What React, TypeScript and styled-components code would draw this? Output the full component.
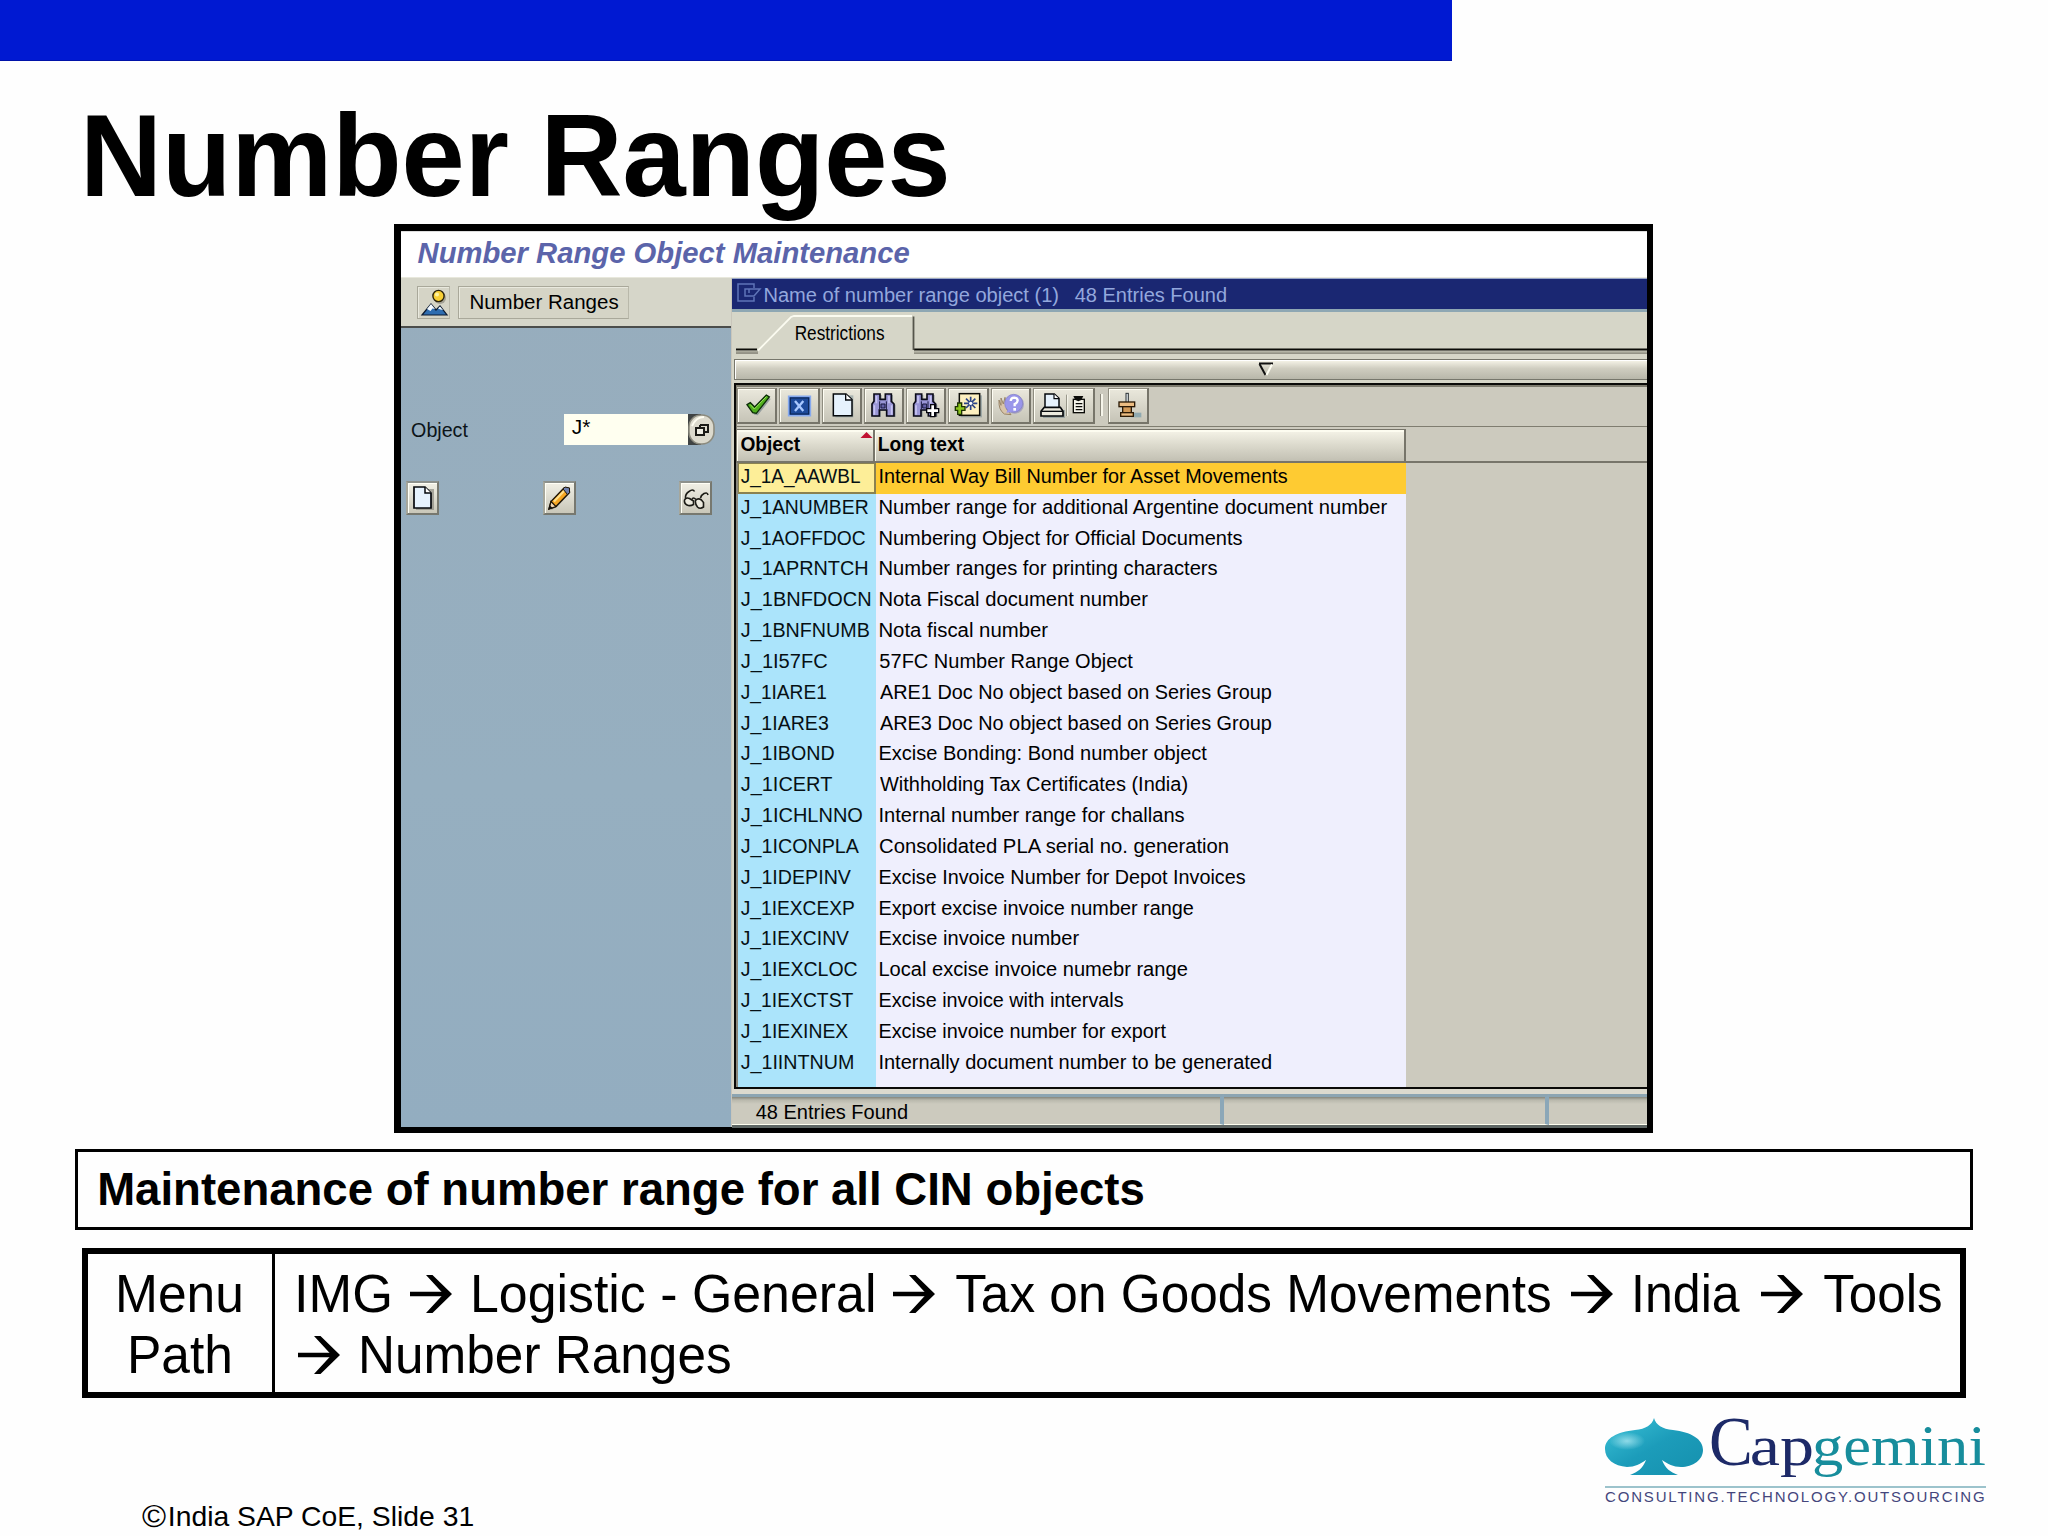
import React, { useLayoutEffect, useRef, useState } from "react";
import styled, { createGlobalStyle } from "styled-components";

const GlobalStyle = createGlobalStyle`
  html, body { margin: 0; padding: 0; background: #fefefe; }
  *, *::before, *::after { box-sizing: border-box; }
  body { font-family: "Liberation Sans", Arial, sans-serif; color: #000; overflow: hidden; }
`;

/* ---------- fitted text ---------- */

const FitBox = styled.span<{ $w: number; $size: number; $lh: number; $bold?: boolean; $italic?: boolean; $color?: string; $serif?: boolean; $gap?: number }>`
  display: block;
  flex: none;
  width: ${(p) => p.$w}px;
  height: ${(p) => p.$lh}px;
  line-height: ${(p) => p.$lh}px;
  font-size: ${(p) => p.$size}px;
  font-weight: ${(p) => (p.$bold ? 700 : 400)};
  font-style: ${(p) => (p.$italic ? "italic" : "normal")};
  font-family: ${(p) => (p.$serif ? '"Liberation Serif", "Times New Roman", serif' : '"Liberation Sans", Arial, sans-serif')};
  color: ${(p) => p.$color ?? "#000"};
  margin-left: ${(p) => p.$gap ?? 0}px;
  white-space: pre;
`;

const FitInner = styled.span`
  display: inline-block;
  transform-origin: 0 0;
`;

type FitProps = {
  children: string;
  w: number;
  size: number;
  lh: number;
  bold?: boolean;
  italic?: boolean;
  serif?: boolean;
  color?: string;
  gap?: number;
};

/* Stretches a line of text so that its ink spans exactly w pixels. */
function Fit({ children, w, size, lh, bold, italic, serif, color, gap }: FitProps) {
  const ref = useRef<HTMLSpanElement>(null);
  const [tf, setTf] = useState("none");
  useLayoutEffect(() => {
    const el = ref.current;
    const ctx = document.createElement("canvas").getContext("2d");
    if (!el || !ctx) return;
    const cs = getComputedStyle(el);
    ctx.font = `${cs.fontStyle} ${cs.fontWeight} 400px ${cs.fontFamily}`;
    const m = ctx.measureText(children);
    const k = parseFloat(cs.width) / m.width;
    const left = -m.actualBoundingBoxLeft * k;
    const s = w / (m.actualBoundingBoxRight * k - left);
    setTf(`translateX(${-left * s}px) scaleX(${s})`);
  }, [children, w]);
  return (
    <FitBox $w={w} $size={size} $lh={lh} $bold={bold} $italic={italic} $serif={serif} $color={color} $gap={gap}>
      <FitInner ref={ref} style={{ transform: tf }}>
        {children}
      </FitInner>
    </FitBox>
  );
}

/* ---------- slide ---------- */

const Slide = styled.main`
  width: 2048px;
  height: 1536px;
  overflow: hidden;
  display: flex;
  flex-direction: column;
  align-items: flex-start;
  background: #fefefe;
`;

const TopBar = styled.div`
  flex: none;
  width: 1452px;
  height: 61px;
  background: #0019d2;
  border-bottom: 1px solid #0012a8;
`;

const Heading = styled.h1`
  margin: 0;
  flex: none;
  height: 163px;
  padding-left: 87px;
`;

const Frame = styled.section`
  flex: none;
  width: 1259px;
  height: 909px;
  margin-left: 394px;
  border: 6px solid #000;
  border-top-width: 7px;
  border-left-width: 7px;
  display: flex;
  flex-direction: column;
  background: #d6d6c8;
`;

const ScreenTitle = styled.header`
  flex: none;
  height: 47px;
  padding-left: 17px;
  background: #fff;
  border-top: 1px solid #ddd;
  border-bottom: 1px solid #e8e8dc;
`;

const Split = styled.div`
  flex: 1;
  min-height: 0;
  display: flex;
`;

/* ---------- left pane ---------- */

const LeftPane = styled.div`
  flex: none;
  width: 330px;
  display: flex;
  flex-direction: column;
  background: linear-gradient(#97adbd, #96afc0 60%, #93adc0);
`;

const LeftBar = styled.div`
  flex: none;
  height: 50px;
  display: flex;
  gap: 8px;
  padding: 8px 0 0 16px;
  background: #d6d6c9;
  border-bottom: 2px solid #4b4d4b;
`;

const FlatButton = styled.button<{ $w: number }>`
  width: ${(p) => p.$w}px;
  height: 33px;
  padding: 0;
  display: flex;
  border: 1px solid #a9a89a;
  border-right-color: #b9b8aa;
  box-shadow: inset 1px 1px 0 #e9e9de;
  background: #d5d4c6;
`;

const FieldRow = styled.div`
  flex: none;
  height: 31px;
  margin-top: 86px;
  padding-left: 11px;
  display: flex;
`;

const Field = styled.div`
  width: 124px;
  height: 31px;
  margin-left: 96px;
  padding-left: 8px;
  background: #fffff0;
`;

const MatchCode = styled.div`
  width: 27px;
  height: 31px;
  background: linear-gradient(90deg, #3f4343 50%, transparent 50%);
`;

const ActionRow = styled.div`
  flex: none;
  margin-top: 36px;
  padding: 0 19px 0 5px;
  display: flex;
  justify-content: space-between;
`;

const SquareButton = styled.button`
  width: 33px;
  height: 34px;
  padding: 0;
  display: flex;
  border: 2px solid #77786f;
  border-top-color: #8d918c;
  border-left-color: #a6a79c;
  box-shadow: inset 1px 1px 0 #fffff6;
  background: linear-gradient(#f1f0e6, #c9c7b9);
`;

/* ---------- result list ---------- */

const Popup = styled.div`
  flex: 1;
  min-width: 0;
  display: flex;
  flex-direction: column;
  border-left: 1px solid #c9c6bb;
  background: #d6d6c8;
`;

const PopupTitle = styled.div`
  flex: none;
  height: 34px;
  display: flex;
  padding-left: 5px;
  border-top: 1px solid #9aa7c6;
  border-bottom: 3px solid #8ea7b3;
  background: #1a2772;
`;

const TabStrip = styled.div`
  flex: none;
  height: 47px;
  position: relative;
`;

const TabShape = styled.svg`
  position: absolute;
  left: 0;
  top: 0;
`;

const TabLabel = styled.div`
  position: relative;
  padding-left: 64px;
`;

const Splitter = styled.div`
  flex: none;
  height: 21px;
  margin-left: 2px;
  padding: 2px 0 0 523px;
  border: 1px solid #77776c;
  border-right: 0;
  box-shadow: inset 1px 1px 0 #fff;
  background: linear-gradient(#f8f6ea, #cfcdc0 45%, #b8b7aa);
`;

const ListBox = styled.div`
  flex: none;
  height: 706px;
  margin: 3px 0 0 2px;
  border: 2px solid #0a0a08;
  border-right: 0;
  box-shadow: inset 1px 2px 0 #7d7b6e;
  background: #cccabe;
  display: flex;
  flex-direction: column;
`;

const ToolBar = styled.div`
  flex: none;
  height: 42px;
  padding: 3px 0 0 1px;
  display: flex;
  border-bottom: 1px solid #7f7d70;
`;

const ToolButton = styled.button<{ $w: number; $gap?: number }>`
  flex: none;
  width: ${(p) => p.$w}px;
  height: 36px;
  padding: 0;
  margin-left: ${(p) => p.$gap ?? 2}px;
  display: flex;
  border: 1px solid #8f8d80;
  border-right: 2px solid #77756a;
  border-bottom: 2px solid #77756a;
  box-shadow: inset 1px 1px 0 #fffef4;
  background: linear-gradient(#eae8dc, #c6c4b7);
  svg { margin: -1px; flex: none; }
`;

const Divider = styled.i`
  flex: none;
  width: 3px;
  height: 22px;
  margin: 6px 0 0 5px;
  border-left: 1px solid #8a887c;
  border-right: 2px solid #f6f5ea;
`;

const HeadRow = styled.div`
  flex: none;
  height: 36px;
  padding: 2px 0 0 1px;
  display: flex;
  border-bottom: 2px solid #77756a;
`;

const HeadCell = styled.div<{ $w: number }>`
  flex: none;
  width: ${(p) => p.$w}px;
  height: 32px;
  display: flex;
  padding-left: 3px;
  border-top: 1px solid #77756a;
  border-right: 2px solid #77756a;
  box-shadow: inset 1px 2px 0 #fdfcf0;
  background: linear-gradient(#f6f4e8, #dbd9cc 50%, #c2c0b3);
`;

const SortMark = styled.svg`
  margin: 2px 0 0 60px;
`;

const Grid = styled.div`
  flex: 1;
  width: 670px;
  padding-left: 2px;
  display: flex;
  flex-direction: column;
  background: linear-gradient(90deg, #8a887c 2px, #abe4fb 2px, #abe4fb 139.6px, #efeffd 139.6px);
`;

const Row = styled.div<{ $on?: boolean }>`
  flex: none;
  height: 30.84px;
  display: flex;
  background: ${(p) => (p.$on ? "#fecb32" : "transparent")};
`;

const KeyCell = styled.div<{ $on?: boolean }>`
  flex: none;
  width: 137.6px;
  padding-left: 3px;
  background: ${(p) => (p.$on ? "#fdee98" : "transparent")};
  box-shadow: ${(p) => (p.$on ? "inset -2px -2px 0 #8a8250, inset 1px 1px 0 #8a8250" : "none")};
`;

const StatusBar = styled.div`
  flex: none;
  height: 39px;
  display: flex;
  padding-top: 5px;
  border-bottom: 3px solid #5e6664;
  background: #dcdace;
`;

const StatusCell = styled.div<{ $w?: number }>`
  flex: ${(p) => (p.$w ? "none" : "1")};
  width: ${(p) => (p.$w ? `${p.$w}px` : "auto")};
  padding-left: 24px;
  border-top: 3px solid #8ca5b2;
  border-right: ${(p) => (p.$w ? "4px solid #8ba7b8" : "0")};
  border-bottom: 1px solid #fffff0;
  background: linear-gradient(#85867b, #b9b8ac 3px, #cccabe 7px);
`;

/* ---------- notes ---------- */

const Note = styled.div`
  flex: none;
  width: 1898px;
  height: 81px;
  margin: 16px 0 0 75px;
  padding-left: 22px;
  border: 3px solid #000;
`;

const PathTable = styled.div`
  flex: none;
  width: 1884px;
  height: 150px;
  margin: 18px 0 0 82px;
  border: 6px solid #000;
  display: flex;
`;

const PathLabel = styled.div`
  width: 187px;
  padding: 9px 0 0 0;
  border-right: 3px solid #000;
  display: flex;
  flex-direction: column;
  align-items: center;
`;

const PathBody = styled.div`
  flex: 1;
  padding: 9px 0 0 23px;
`;

const PathLine = styled.div`
  display: flex;
  height: 61.3px;
`;

const Arrow = styled.svg<{ $gap: number }>`
  flex: none;
  margin: 12px 0 0 ${(p) => p.$gap}px;
`;

const Foot = styled.footer`
  flex: none;
  width: 2048px;
  height: 138px;
  padding: 0 61px 0 142px;
  display: flex;
  justify-content: space-between;
`;

const Copyright = styled.div`
  margin-top: 104px;
  display: flex;
`;

const Logo = styled.div`
  width: 383px;
  margin-top: 18px;
  padding-left: 1px;
`;

const LogoTop = styled.div`
  height: 70px;
  display: flex;
`;

const LogoRule = styled.div`
  width: 381px;
  height: 2px;
  margin-bottom: 1px;
  background: #9cc3cc;
`;

const TagLine = styled.div`
  width: 384px;
  font-size: 15px;
  line-height: 15px;
  color: #44467c;
  letter-spacing: 1.83px;
  white-space: nowrap;
`;

/* ---------- drawings ---------- */

const Icon = ({ w = 40, children }: { w?: number; children: React.ReactNode }) => (
  <svg width={w} height={36} viewBox={`0 0 ${w * 3} 108`}>
    {children}
  </svg>
);

const Binoculars = () => (
  <g>
    <path d="M24 84V48L30 40V18H48V34H64V18H82V40L90 48V84H68V66H46V84Z" fill="#5f6f7c" opacity=".5" transform="translate(5 3)" />
    <path d="M24 84V48L30 40V18H48V34H64V18H82V40L90 48V84H68V66H46V84Z" fill="#9a96d6" stroke="#0b0b18" strokeWidth="5" />
    <path d="M37 24V46M75 24V46M31 52V80M83 52V80" stroke="#c8c5f2" strokeWidth="5" />
    <path d="M47 40V64M67 40V64" stroke="#16163a" strokeWidth="3" />
    <path d="M51 48H63V60H51Z" fill="#6561a8" stroke="#16163a" strokeWidth="3" />
  </g>
);

const PageDrawing = () => (
  <g>
    <path d="M40 22H94V88H40Z" fill="#7c8f96" opacity=".55" />
    <path d="M34 18H72L90 35V83H34Z" fill="#e6f2fd" stroke="#05080c" strokeWidth="4.5" />
    <path d="M71 18V36H90" fill="#fff" stroke="#05080c" strokeWidth="4" />
  </g>
);

const PathArrow = ({ gap = 21 }: { gap?: number }) => (
  <Arrow $gap={gap} width="42" height="38" viewBox="0 0 42 38">
    <path d="M0 19H38" stroke="#000" strokeWidth="4.6" fill="none" />
    <path d="M16 0H22.5L42 19L22.5 38H16L33.5 19Z" fill="#000" />
  </Arrow>
);

/* ---------- data ---------- */

const rows: [string, number, string, number][] = [
  ["J_1A_AAWBL", 119, "Internal Way Bill Number for Asset Movements", 407],
  ["J_1ANUMBER", 127, "Number range for additional Argentine document number", 507],
  ["J_1AOFFDOC", 124, "Numbering Object for Official Documents", 362],
  ["J_1APRNTCH", 126, "Number ranges for printing characters", 337],
  ["J_1BNFDOCN", 129, "Nota Fiscal document number", 268],
  ["J_1BNFNUMB", 128, "Nota fiscal number", 168],
  ["J_1I57FC", 86, "57FC Number Range Object", 253],
  ["J_1IARE1", 85, "ARE1 Doc No object based on Series Group", 391],
  ["J_1IARE3", 87, "ARE3 Doc No object based on Series Group", 391],
  ["J_1IBOND", 93, "Excise Bonding: Bond number object", 327],
  ["J_1ICERT", 91, "Withholding Tax Certificates (India)", 307],
  ["J_1ICHLNNO", 121, "Internal number range for challans", 304],
  ["J_1ICONPLA", 118, "Consolidated PLA serial no. generation", 348],
  ["J_1IDEPINV", 110, "Excise Invoice Number for Depot Invoices", 365],
  ["J_1IEXCEXP", 113, "Export excise invoice number range", 313],
  ["J_1IEXCINV", 108, "Excise invoice number", 199],
  ["J_1IEXCLOC", 116, "Local excise invoice numebr range", 307],
  ["J_1IEXCTST", 112, "Excise invoice with intervals", 243],
  ["J_1IEXINEX", 107, "Excise invoice number for export", 286],
  ["J_1IINTNUM", 112, "Internally document number to be generated", 391],
];

export default function App() {
  return (
    <Slide>
      <GlobalStyle />
      <TopBar />
      <Heading>
        <Fit w={859} size={117} lh={189} bold>Number Ranges</Fit>
      </Heading>

      <Frame>
        <ScreenTitle>
          <Fit w={491} size={29} lh={42} bold italic color="#5b64aa">Number Range Object Maintenance</Fit>
        </ScreenTitle>
        <Split>
          <LeftPane>
            <LeftBar>
              <FlatButton $w={33}>
                <svg width="31" height="31" viewBox="0 0 31 31">
                  <circle cx="22" cy="11" r="6" fill="#8d8c80" opacity=".7" />
                  <circle cx="20.5" cy="9" r="5.6" fill="#f8cf35" stroke="#2a2108" strokeWidth="1.4" />
                  <circle cx="19" cy="7.6" r="2" fill="#fff3a0" />
                  <path d="M4 28L13 17L18 23L22 19L29 28Z" fill="#2f6db0" stroke="#0c1a30" strokeWidth="1.2" />
                  <path d="M9 22L13 17L17 22L14.5 21.5L12.5 24Z M20 21.5L22 19.4L25 23L22.5 22.5Z" fill="#f4faff" />
                </svg>
              </FlatButton>
              <FlatButton $w={171}>
                <Fit w={147} size={20} lh={31} gap={11}>Number Ranges</Fit>
              </FlatButton>
            </LeftBar>
            <FieldRow>
              <Fit w={56} size={20} lh={32} color="#0c1418">Object</Fit>
              <Field>
                <Fit w={18} size={20} lh={27}>J*</Fit>
              </Field>
              <MatchCode>
                <svg width="27" height="31" viewBox="0 0 27 31">
                  <rect x="1" y="1" width="25" height="29" rx="12" fill="#dcdacd" stroke="#8c8b7e" strokeWidth="1.6" />
                  <path d="M4 12Q8 3 16 3" stroke="#fffef2" strokeWidth="2" fill="none" />
                  <path d="M12 11H20V18H17M12 11V14" fill="none" stroke="#1b1b17" strokeWidth="2" />
                  <rect x="8" y="14" width="8" height="7" fill="#efeee4" stroke="#1b1b17" strokeWidth="2" />
                </svg>
              </MatchCode>
            </FieldRow>
            <ActionRow>
              <SquareButton>
                <svg width="29" height="30" viewBox="0 0 29 30">
                  <path d="M8 6H26V27H8Z" fill="#8b8a80" opacity=".7" />
                  <path d="M6 4H17L23 10V25H6Z" fill="#e6f2fd" stroke="#05080c" strokeWidth="1.7" />
                  <path d="M17 4V10H23" fill="#fff" stroke="#05080c" strokeWidth="1.5" />
                </svg>
              </SquareButton>
              <SquareButton>
                <svg width="29" height="30" viewBox="0 0 29 30">
                  <path d="M6 27L9 20L22 6L26 9L12 24Z" fill="#6f6e66" opacity=".6" />
                  <path d="M4 26L6 18.5L19 5L24 5.5L24 10L11 23.5Z" fill="#f5a623" stroke="#1d1406" strokeWidth="1.4" />
                  <path d="M9 18.5L19.5 7.5" stroke="#ffe08a" strokeWidth="2" />
                  <path d="M18 6L20 4L24.5 5L24.5 9.5L22.5 11.5Z" fill="#6d7fae" stroke="#1d1406" strokeWidth="1" />
                  <path d="M4 26L6 18.5L11 23.5Z" fill="#f4d9b4" stroke="#1d1406" strokeWidth="1.2" />
                  <path d="M4 26L5 22.5L7.6 25Z" fill="#111" />
                </svg>
              </SquareButton>
              <SquareButton>
                <svg width="29" height="30" viewBox="0 0 29 30" fill="none" stroke="#1b1b15" strokeWidth="1.6">
                  <path d="M4.5 15.5Q4 11 8 8.5Q12 5.5 13.5 8.5M19.5 15Q20 12 23 10.5Q26.5 9 27 12" />
                  <path d="M3.5 17Q5 14 8.5 15.5L12.5 18V21.5Q9 23.5 6 22Q3 20.5 3.5 17Z" fill="#eceade" />
                  <path d="M14.5 17.5Q17 14.5 20.5 17L22.5 19.5V24Q19 26.5 16.5 24Q14 21 14.5 17.5Z" fill="#eceade" />
                  <path d="M11 16.5Q12 13.5 15 16.5" />
                </svg>
              </SquareButton>
            </ActionRow>
          </LeftPane>

          <Popup>
            <PopupTitle>
              <svg width="25" height="28" viewBox="0 0 25 28" fill="none" stroke="#5f74b8" strokeWidth="1.5">
                <path d="M17 9V5H1V22H17V18" />
                <path d="M23 10H8V17H17L23 10H12V14" />
              </svg>
              <Fit w={293} size={19.5} lh={33} gap={3} color="#93a7dd">Name of number range object (1)</Fit>
              <Fit w={151} size={19.5} lh={33} gap={17} color="#93a7dd">48 Entries Found</Fit>
            </PopupTitle>
            <TabStrip>
              <TabShape width="915" height="48" viewBox="0 0 915 48">
                <path d="M4 37.5H25M182 37.5H915" stroke="#0c0c08" strokeWidth="2" />
                <path d="M4 41H26M182 41H915" stroke="#7d7c70" strokeWidth="1.4" />
                <path d="M182 40H915M4 39.5H26" stroke="#a9a99b" strokeWidth="1.4" />
                <path d="M26 38.5L59 5L62 4H180" fill="none" stroke="#fbfbf0" strokeWidth="1.8" />
                <path d="M181.5 4.5V38" stroke="#55554b" strokeWidth="1.8" />
              </TabShape>
              <TabLabel>
                <Fit w={88} size={20} lh={43}>Restrictions</Fit>
              </TabLabel>
            </TabStrip>
            <Splitter>
              <svg width="16" height="14" viewBox="0 0 16 14">
                <path d="M1 1.5H15" stroke="#111" strokeWidth="2" />
                <path d="M1.5 2L7.5 13" stroke="#111" strokeWidth="2" />
                <path d="M14 2.5L8.5 13" stroke="#fffff4" strokeWidth="2" />
              </svg>
            </Splitter>
            <ListBox>
              <ToolBar>
                <ToolButton $w={40.3} $gap={0}>
                  <Icon>
                    <path d="M36 56L44 51L58 64L92 27L101 33L62 82L52 80Z" fill="#6b7c84" opacity=".6" />
                    <path d="M30 50L40 44L53 57L88 21L97 27L58 76L47 74Z" fill="#4fae1d" stroke="#0b2c07" strokeWidth="4" />
                    <path d="M40 50L52 63L88 26" stroke="#9be35a" strokeWidth="3" fill="none" />
                  </Icon>
                </ToolButton>
                <ToolButton $w={40.3}>
                  <Icon>
                    <rect x="29" y="25" width="65" height="58" fill="#1d4a9b" stroke="#86a9ee" strokeWidth="5" />
                    <rect x="34" y="30" width="55" height="48" fill="none" stroke="#0d2450" strokeWidth="3" />
                    <path d="M48 39L73 69M73 39L48 69" stroke="#a9c8ff" strokeWidth="7" />
                  </Icon>
                </ToolButton>
                <ToolButton $w={40.3}>
                  <Icon><PageDrawing /></Icon>
                </ToolButton>
                <ToolButton $w={40.3}>
                  <Icon><Binoculars /></Icon>
                </ToolButton>
                <ToolButton $w={40.3}>
                  <Icon>
                    <g transform="translate(-1 0)"><Binoculars /></g>
                    <path d="M74 50H86V62H98V74H86V86H74V74H62V62H74Z" fill="#fff" stroke="#05050c" strokeWidth="4" />
                  </Icon>
                </ToolButton>
                <ToolButton $w={40.3}>
                  <Icon>
                    <rect x="38" y="22" width="64" height="66" fill="#7d8f95" opacity=".6" />
                    <rect x="34" y="17" width="61" height="65" fill="#fdf0c0" stroke="#0c0c08" strokeWidth="4.5" />
                    <path d="M68 26V66M48 46H88M54 32L82 60M82 32L54 60" stroke="#2c4488" strokeWidth="5" />
                    <circle cx="68" cy="46" r="5" fill="#fff" />
                    <path d="M29 45H41V56H51V67H41V79H29V67H22V56H29Z" fill="#8cc51c" stroke="#1c3204" strokeWidth="4" />
                  </Icon>
                </ToolButton>
                <ToolButton $w={40.3}>
                  <Icon>
                    <path d="M40 78Q22 66 24 36L30 52L30 30L37 48L42 28L45 48L56 40L46 62L60 80Z" fill="#d8c4aa" stroke="#9a8568" strokeWidth="3" />
                    <circle cx="71" cy="49" r="28" fill="#7a78b8" opacity=".5" />
                    <circle cx="68" cy="46" r="27" fill="#9a96ea" stroke="#7f7bc4" strokeWidth="2" />
                    <path d="M46 74L52 62L64 72Z" fill="#9a96ea" />
                    <path d="M59 39Q60 29 70 29Q80 30 80 38Q79 45 71 48V55" stroke="#fff" strokeWidth="7" fill="none" />
                    <rect x="67" y="60" width="8" height="8" fill="#fff" />
                  </Icon>
                </ToolButton>
                <ToolButton $w={62}>
                  <Icon w={62}>
                    <path d="M30 66H96V90H30Z" fill="#7d8f95" opacity=".6" />
                    <path d="M36 60V18H64L78 31V60Z" fill="#e6f2fd" stroke="#05080c" strokeWidth="4.5" />
                    <path d="M63 18V32H78" fill="#fff" stroke="#05080c" strokeWidth="3.5" />
                    <path d="M34 58L24 70V84H90V70L82 58Z" fill="#eceadf" stroke="#05080c" strokeWidth="5" />
                    <path d="M25 70H89" stroke="#05080c" strokeWidth="4" />
                    <path d="M101 20V84" stroke="#8d8b7e" strokeWidth="3" />
                    <path d="M104 20V84" stroke="#fbfaf0" strokeWidth="3" />
                    <rect x="121" y="34" width="33" height="40" fill="#f6f5ec" stroke="#0b0b08" strokeWidth="4" />
                    <path d="M121 24H151L145 36L136 40L127 36Z" fill="#0b0b08" />
                    <path d="M128 47H148M128 56H148M128 65H148" stroke="#0b0b08" strokeWidth="4" />
                  </Icon>
                </ToolButton>
                <Divider />
                <ToolButton $w={41} $gap={5}>
                  <Icon>
                    <path d="M70 74H100V88H70Z" fill="#7fa0ac" opacity=".8" />
                    <rect x="54" y="16" width="7" height="32" fill="#dfe6ea" stroke="#2c3236" strokeWidth="3" />
                    <rect x="33" y="42" width="47" height="14" fill="#edbd82" stroke="#2b1a06" strokeWidth="4" />
                    <rect x="44" y="56" width="26" height="19" fill="#d39a58" stroke="#2b1a06" strokeWidth="4" />
                    <rect x="38" y="74" width="38" height="11" fill="#edbd82" stroke="#2b1a06" strokeWidth="4" />
                  </Icon>
                </ToolButton>
              </ToolBar>
              <HeadRow>
                <HeadCell $w={138}>
                  <Fit w={59} size={19.5} lh={29} bold gap={1}>Object</Fit>
                  <SortMark width="13" height="7" viewBox="0 0 13 7">
                    <path d="M6.5 0L12.5 6H0.5Z" fill="#c01030" />
                  </SortMark>
                </HeadCell>
                <HeadCell $w={531}>
                  <Fit w={85} size={19.5} lh={29} bold gap={1}>Long text</Fit>
                </HeadCell>
              </HeadRow>
              <Grid>
                {rows.map(([key, kw, text, tw], i) => (
                  <Row key={key} $on={i === 0}>
                    <KeyCell $on={i === 0}>
                      <Fit w={kw} size={20} lh={27.6} color="#061014">{key}</Fit>
                    </KeyCell>
                    <Fit w={tw} size={20} lh={27.6} gap={4}>{text}</Fit>
                  </Row>
                ))}
              </Grid>
            </ListBox>
            <StatusBar>
              <StatusCell $w={492}>
                <Fit w={151} size={20} lh={30}>48 Entries Found</Fit>
              </StatusCell>
              <StatusCell $w={325} />
              <StatusCell />
            </StatusBar>
          </Popup>
        </Split>
      </Frame>

      <Note>
        <Fit w={1043} size={46.5} lh={74} bold>Maintenance of number range for all CIN objects</Fit>
      </Note>

      <PathTable>
        <PathLabel>
          <Fit w={122} size={53} lh={61.3}>Menu</Fit>
          <Fit w={99} size={53} lh={61.3}>Path</Fit>
        </PathLabel>
        <PathBody>
          <PathLine>
            <Fit w={91} size={53} lh={61.3}>IMG</Fit>
            <PathArrow />
            <Fit w={399} size={53} lh={61.3} gap={22}>Logistic - General</Fit>
            <PathArrow gap={20} />
            <Fit w={594} size={53} lh={61.3} gap={21}>Tax on Goods Movements</Fit>
            <PathArrow />
            <Fit w={105} size={53} lh={61.3} gap={22}>India</Fit>
            <PathArrow />
            <Fit w={117} size={53} lh={61.3} gap={21}>Tools</Fit>
          </PathLine>
          <PathLine>
            <PathArrow gap={0} />
            <Fit w={368} size={53} lh={61.3} gap={22}>Number Ranges</Fit>
          </PathLine>
        </PathBody>
      </PathTable>

      <Foot>
        <Copyright>
          <Fit w={24} size={31} lh={29}>©</Fit>
          <Fit w={303} size={28} lh={30} gap={4}>India SAP CoE, Slide 31</Fit>
        </Copyright>
        <Logo>
          <LogoTop>
            <svg width="98" height="62" viewBox="0 0 98 62">
              <defs>
                <linearGradient id="spade" x1="0" y1="0" x2="1" y2="1">
                  <stop offset="0" stopColor="#3cc3d8" />
                  <stop offset=".5" stopColor="#1c9cba" />
                  <stop offset="1" stopColor="#1590ad" />
                </linearGradient>
                <radialGradient id="gloss" cx=".5" cy=".5" r=".5">
                  <stop offset="0" stopColor="#a8e6f0" stopOpacity=".8" />
                  <stop offset="1" stopColor="#a8e6f0" stopOpacity="0" />
                </radialGradient>
              </defs>
              <path
                d="M49 2C51 9 57 13 68 14C86 16 98 23 98 34C98 44 88 51 76 51C68 51 63 48 57 44C60 52 65 56 73 59H25C33 56 38 52 41 44C35 48 30 51 22 51C9 50 0 43 0 33C0 22 12 16 30 14C41 13 47 9 49 2Z"
                fill="url(#spade)"
              />
              <ellipse cx="22" cy="25" rx="18" ry="9" fill="url(#gloss)" />
            </svg>
            <Fit w={39} size={69} lh={53.4} serif gap={8} color="#1d2a68">C</Fit>
            <Fit w={60} size={58} lh={60.8} serif gap={2} color="#1d2a68">ap</Fit>
            <Fit w={171} size={58} lh={60.8} serif gap={2} color="#178d9c">gemini</Fit>
          </LogoTop>
          <LogoRule />
          <TagLine>CONSULTING.TECHNOLOGY.OUTSOURCING</TagLine>
        </Logo>
      </Foot>
    </Slide>
  );
}
